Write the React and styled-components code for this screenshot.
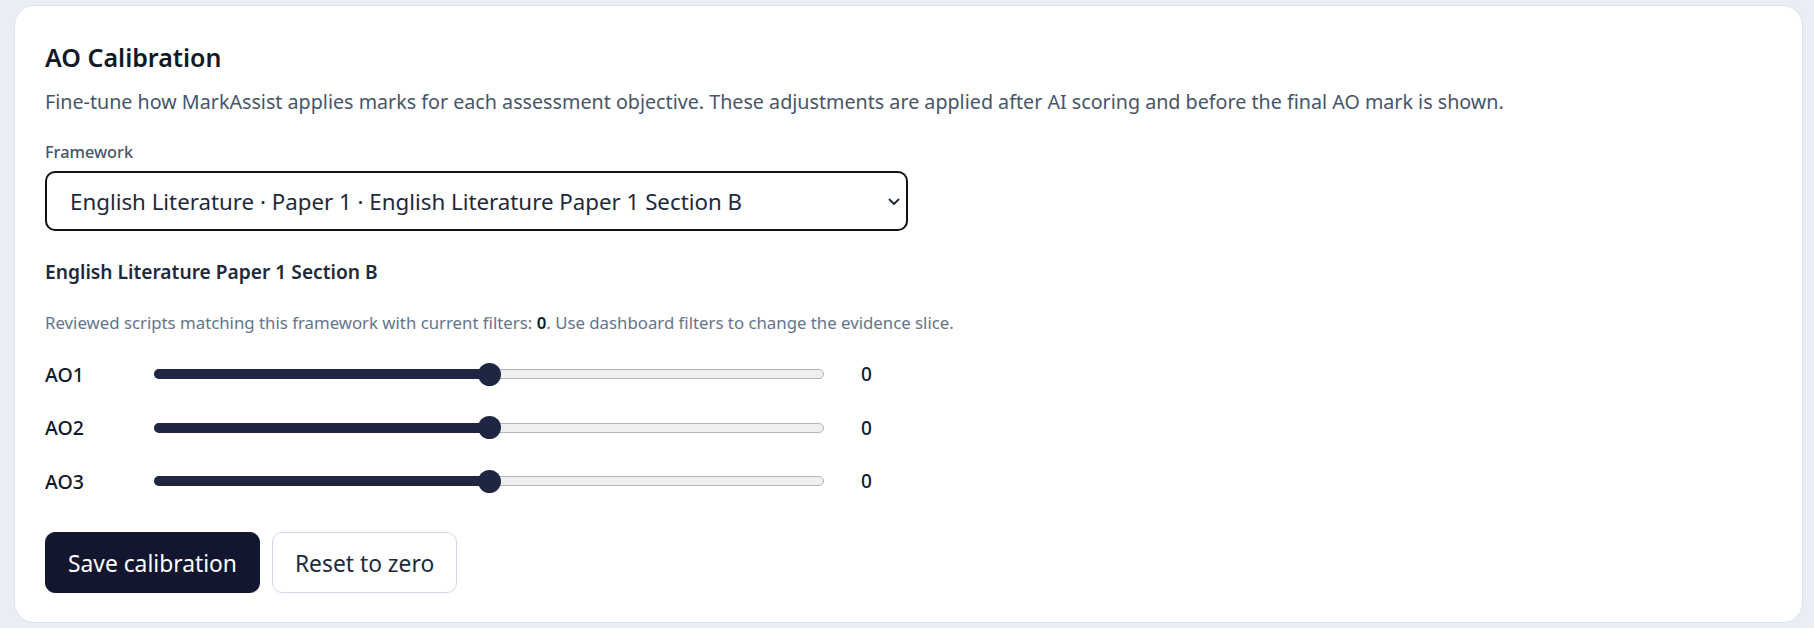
import React, { useState } from "react";
import styled, { createGlobalStyle } from "styled-components";

const GlobalStyle = createGlobalStyle`
  * { box-sizing: border-box; }
  body {
    margin: 0;
    background: #e9eef4;
    font-family: "Noto Sans", "Open Sans", sans-serif;
    color: #0f172a;
  }
`;

const AOS = ["AO1", "AO2", "AO3"];

function Slider({ value, min, max }) {
  const pct = ((value - min) / (max - min)) * 100;
  return (
    <Track>
      <Fill style={{ width: `calc(${pct}% + 1px)` }} />
      <Thumb style={{ left: `${pct}%` }} />
    </Track>
  );
}

function App() {
  const [values] = useState({ AO1: 0, AO2: 0, AO3: 0 });
  return (
    <Page>
      <GlobalStyle />
      <Card>
        <Title>AO Calibration</Title>
        <Description>
          Fine-tune how MarkAssist applies marks for each assessment objective. These
          adjustments are applied after AI scoring and before the final AO mark is shown.
        </Description>

        <FieldLabel htmlFor="framework">Framework</FieldLabel>
        <SelectWrap>
          <Select id="framework" defaultValue="el-p1-b">
            <option value="el-p1-b">
              English Literature · Paper 1 · English Literature Paper 1 Section B
            </option>
          </Select>
          <Chevron width="12" height="8" viewBox="0 0 12 8">
            <path d="M1.5 1.5 L6 6 L10.5 1.5" fill="none" stroke="#1e293b" strokeWidth="1.8" strokeLinecap="round" strokeLinejoin="round" />
          </Chevron>
        </SelectWrap>

        <SubHeading>English Literature Paper 1 Section B</SubHeading>
        <Evidence>
          Reviewed scripts matching this framework with current filters: <strong>0</strong>. Use
          dashboard filters to change the evidence slice.
        </Evidence>

        <Rows>
          {AOS.map((ao) => (
            <Row key={ao}>
              <AoLabel>{ao}</AoLabel>
              <Slider value={values[ao]} min={-5} max={5} />
              <AoValue>{values[ao]}</AoValue>
            </Row>
          ))}
        </Rows>

        <Actions>
          <PrimaryButton>Save calibration</PrimaryButton>
          <SecondaryButton>Reset to zero</SecondaryButton>
        </Actions>
      </Card>
    </Page>
  );
}

export default App;

const Page = styled.div`
  padding: 5px 11px 5px 14px;
`;

const Card = styled.section`
  background: #fff;
  border: 1px solid #dbe3ec;
  border-radius: 20px;
  padding: 36px 30px 29px;
`;

const Title = styled.h2`
  margin: 0;
  font-size: 25px;
  line-height: 31px;
  font-weight: 600;
  color: #111827;
`;

const Description = styled.p`
  margin: 15px 0 0;
  font-size: 19.7px;
  line-height: 27px;
  color: #475569;
`;

const FieldLabel = styled.label`
  display: block;
  margin-top: 27px;
  font-size: 16.3px;
  line-height: 21px;
  font-weight: 500;
  color: #475569;
`;

const SelectWrap = styled.div`
  position: relative;
  width: 863px;
  margin-top: 8px;
`;

const Select = styled.select`
  appearance: none;
  width: 100%;
  height: 60px;
  padding: 0 40px 0 23px;
  border: 2px solid #111;
  border-radius: 10px;
  background: #fff;
  font-family: inherit;
  font-size: 22.3px;
  color: #1e293b;
`;

const Chevron = styled.svg`
  position: absolute;
  right: 8px;
  top: 27px;
  pointer-events: none;
`;

const SubHeading = styled.h3`
  margin: 28px 0 0;
  font-size: 19.2px;
  line-height: 25px;
  font-weight: 600;
  color: #1e293b;
`;

const Evidence = styled.p`
  margin: 27px 0 0;
  font-size: 16.8px;
  line-height: 24px;
  color: #64748b;

  strong {
    color: #0f172a;
    font-weight: 600;
  }
`;

const Rows = styled.div`
  display: flex;
  flex-direction: column;
  gap: 13.5px;
  margin-top: 19px;
`;

const Row = styled.div`
  display: flex;
  align-items: center;
  height: 40px;
`;

const AoLabel = styled.span`
  width: 109px;
  font-size: 19.5px;
  font-weight: 500;
  color: #0f172a;
`;

const Track = styled.div`
  position: relative;
  width: 670px;
  height: 10px;
  border: 1px solid #b4b4b4;
  border-radius: 5px;
  background: #efefef;
`;

const Fill = styled.div`
  position: absolute;
  left: -1px;
  top: -1px;
  bottom: -1px;
  border-radius: 5px 0 0 5px;
  background: #1f2641;
`;

const Thumb = styled.div`
  position: absolute;
  top: 50%;
  width: 23px;
  height: 23px;
  margin: -11.5px 0 0 -11.5px;
  border-radius: 50%;
  background: #1f2641;
`;

const AoValue = styled.span`
  margin-left: 37px;
  font-size: 19px;
  font-weight: 500;
  color: #0f172a;
`;

const Actions = styled.div`
  display: flex;
  gap: 12px;
  margin-top: 31px;
`;

const PrimaryButton = styled.button`
  height: 61px;
  padding: 2px 22px 0;
  border: 1px solid #12162e;
  border-radius: 10px;
  background: #12162e;
  color: #fff;
  font-family: inherit;
  font-size: 22.8px;
  cursor: pointer;
`;

const SecondaryButton = styled(PrimaryButton)`
  background: #fff;
  border-color: #cfd8e6;
  color: #1e293b;
`;
